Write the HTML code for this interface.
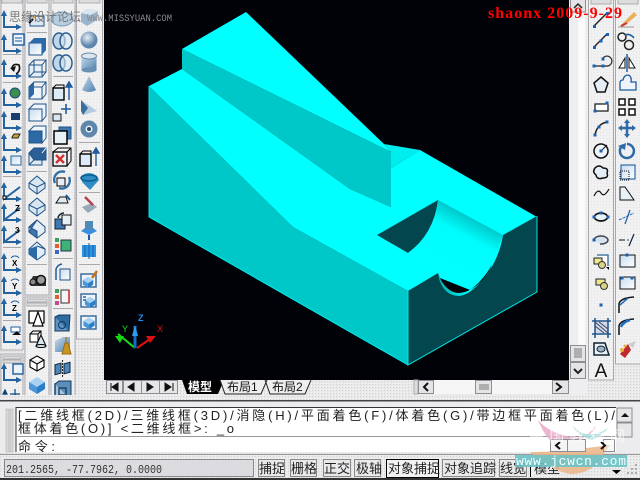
<!DOCTYPE html>
<html><head><meta charset="utf-8"><style>
html,body{margin:0;padding:0;background:#e6e6e6;width:640px;height:480px;overflow:hidden}
svg{display:block}
text{font-family:"WenQuanYi Zen Hei","Liberation Sans","Noto Sans CJK SC",sans-serif}
</style></head><body>
<svg width="640" height="480" viewBox="0 0 640 480">
<defs>
<pattern id="dz" width="3" height="3" patternUnits="userSpaceOnUse"><rect width="3" height="3" fill="#e9e9e9"/><rect width="1" height="1" fill="#d2d2d8"/><rect x="2" y="2" width="1" height="1" fill="#f6f6f6"/></pattern>
<pattern id="tb" width="3" height="3" patternUnits="userSpaceOnUse"><rect width="3" height="3" fill="#f1f1f1"/><rect width="1" height="1" fill="#e4e4e8"/></pattern>
<linearGradient id="lg" x1="0" y1="0" x2="1" y2="1"><stop offset="0" stop-color="#c6dcf0"/><stop offset="1" stop-color="#fff"/></linearGradient>
<linearGradient id="bl" x1="0" y1="0" x2="1" y2="1"><stop offset="0" stop-color="#c9dbea"/><stop offset="1" stop-color="#4d7fae"/></linearGradient>
<linearGradient id="cy" gradientUnits="userSpaceOnUse" x1="468" y1="212" x2="438" y2="270"><stop offset="0" stop-color="#00bfc2"/><stop offset=".35" stop-color="#00fdfd"/><stop offset="1" stop-color="#00ffff"/></linearGradient>
<linearGradient id="cy2" gradientUnits="userSpaceOnUse" x1="436" y1="282" x2="462" y2="272"><stop offset="0" stop-color="#00a9ad"/><stop offset="1" stop-color="#00ffff"/></linearGradient>
<radialGradient id="sp" cx=".4" cy=".35"><stop offset="0" stop-color="#e8f0f8"/><stop offset="1" stop-color="#5f86ad"/></radialGradient>

<g id="u"><path d="M-8-9V6H8" fill="none" stroke="#24639f" stroke-width="2"/><path d="M-11-5-8-11-5-5ZM4 3 10 6 4 9Z" fill="#24639f"/></g>
<g id="u2"><path d="M-8-9V6L8-6M-8 6H8" fill="none" stroke="#24639f" stroke-width="2"/><path d="M-11-5-8-11-5-5ZM4 3 10 6 4 9Z" fill="#24639f"/></g>

<g id="c1"><path d="M-5-5-1-9H9V3L5 7Z" fill="#2b6aa6"/><rect x="-8" y="-4" width="13" height="12" fill="url(#lg)" stroke="#1f5288"/><path d="M-8-4-3-9H9L5-4ZM5-4 9-9V3L5 8Z" fill="#2a6aa8"/></g>
<g id="c2"><rect x="-8" y="-4" width="13" height="12" fill="#e6eef6" stroke="#1f5288"/><path d="M-8-4-3-9H9V3L5 8M5-4 9-9M-3-9V3H9M-3 3-8 8" fill="none" stroke="#1f5288"/></g>
<g id="c3"><rect x="-8" y="-4" width="13" height="12" fill="#f0f5fa" stroke="#1f5288"/><path d="M-8-4-3-9V3L-8 8Z" fill="#2b6aa6"/><path d="M-8-4-3-9H9V3L5 8M5-4 9-9" fill="none" stroke="#1f5288"/></g>
<g id="c4"><rect x="-8" y="-4" width="13" height="12" fill="url(#lg)" stroke="#1f5288"/><path d="M-8-4-3-9H9V3L5 8V-4Z" fill="#eef4fa" stroke="#1f5288"/></g>
<g id="c5"><path d="M-8-4-3-9H9V3L5 8V-4Z" fill="#eef4fa" stroke="#1f5288"/><rect x="-8" y="-4" width="13" height="12" fill="#2b6aa6" stroke="#1f5288"/></g>
<g id="c6"><rect x="-8" y="-4" width="13" height="12" fill="#dfe9f3" stroke="#1f5288"/><path d="M-8-4-3-9H9V3H-3Z" fill="#2b5f96" stroke="#1f5288"/><path d="M5-4 9-9" stroke="#fff"/><path d="M-3 3 -8 8" stroke="#1f5288"/></g>
<g id="dia"><path d="M0-9 8-2V3L0 9-8 3V-2Z" fill="#d8e6f2" stroke="#1f5288"/><path d="M-8-2 0 2 8-2M0 2V9" fill="none" stroke="#1f5288"/></g>
<g id="dia2"><path d="M0-9 8-2V3L0 9-8 3V-2Z" fill="#e3edf6" stroke="#1f5288"/><path d="M0-9-8-2 0 2V9L-8 3Z" fill="#3d77ae" stroke="#1f5288"/></g>
<g id="dia3"><path d="M0-9 8-2V3L0 9-8 3V-2Z" fill="#e3edf6" stroke="#1f5288"/><path d="M-8-2 0-5 0 9-8 3Z" fill="#2b6aa6"/><path d="M0-5 8-2" stroke="#1f5288"/></g>
<g id="rings"><ellipse cx="-3" cy="0" rx="6" ry="8" fill="#bfd5e8" stroke="#2c5f8e" stroke-width="1.5"/><ellipse cx="4" cy="0" rx="6" ry="8" fill="#dce8f2" fill-opacity=".6" stroke="#2c5f8e" stroke-width="1.5"/></g>
<g id="rc"><rect x="-9" y="-4" width="11" height="12" fill="#dcebf7" stroke="#000" stroke-width="1.4"/><path d="M-9-4-6-7H2V5" fill="none" stroke="#000"/><path d="M7 8V-6M4-5 7-10 10-5Z" fill="#1f5c9e" stroke="#1f5c9e" stroke-width="1.4"/></g>
<g id="mv"><rect x="-9" y="1" width="8" height="7" fill="#d8e7f4" stroke="#111"/><path d="M4-9V1M-1-4H9" stroke="#1f5c9e" stroke-width="1.6"/></g>
<g id="off"><rect x="-3" y="-9" width="12" height="12" fill="#3c78b0" stroke="#1f5288"/><rect x="-8" y="-5" width="13" height="13" fill="#e9f1f8" stroke="#000" stroke-width="1.5"/></g>
<g id="xc"><rect x="-9" y="-5" width="14" height="14" fill="#e9f0f6" stroke="#000" stroke-width="1.3"/><path d="M-9-5-4-9H9V4L5 9M5-5 9-9" fill="none" stroke="#000"/><path d="M-6-2 2 6M2-2-6 6" stroke="#d6322e" stroke-width="2.4"/></g>
<g id="rot"><path d="M-7 3A8 8 0 0 1 3-8M7-3A8 8 0 0 1-3 8" fill="none" stroke="#2f6da8" stroke-width="2.4"/><rect x="-5" y="-2" width="8" height="8" fill="#e5eef6" stroke="#000"/></g>
<g id="box"><path d="M-8-5-2-9 9-7 8 2 -2 8-8 4Z" fill="#9bb5cc"/><path d="M-8-5-2-9 9-7 2-3Z" fill="#d8e6f0"/></g>
<g id="sph"><circle r="8.5" fill="url(#sp)"/></g>
<g id="cyl"><rect x="-7.5" y="-7" width="15" height="14" fill="url(#bl)"/><ellipse cy="-7" rx="7.5" ry="3" fill="#dbe6f0" stroke="#6c8aa8"/><ellipse cy="7" rx="7.5" ry="2.5" fill="#6a8fb2"/></g>
<g id="cone"><path d="M0-9 7 5Q0 9-7 5Z" fill="url(#bl)"/></g>
<g id="wed"><path d="M-8-7 8 4 -6 8Z" fill="#b4cbdf"/><path d="M-8-7-8 4-6 8 -1 1Z" fill="#3e6e9b"/></g>
<g id="tor"><circle r="6" fill="none" stroke="#5d87ad" stroke-width="5"/><circle r="2" fill="#234d73"/></g>
<g id="cube3"><path d="M0-8 8-3 0 2-8-3Z" fill="#a8d2f2"/><path d="M-8-3 0 2V9L-8 4Z" fill="#4b97d8"/><path d="M8-3 0 2V9L8 4Z" fill="#2a7dc8"/></g>
<g id="ico-line"><path d="M-7 6 6-7" stroke="#222" stroke-width="1.4"/><rect x="-8" y="5" width="3" height="3" fill="#1c62b0"/><rect x="5" y="-8" width="3" height="3" fill="#1c62b0"/></g>
<g id="mark"><rect x="-1.5" y="-1.5" width="3" height="3" fill="#1c62b0"/></g>
</defs>

<rect width="640" height="480" fill="url(#dz)"/>

<!-- left toolbars -->
<g fill="url(#tb)" stroke="#a9a9ad">
<rect x="1" y="-2" width="22" height="352"/>
<rect x="1" y="354" width="22" height="46"/>
<rect x="25" y="-2" width="24" height="297"/><rect x="25" y="297" width="24" height="103"/>
<rect x="51" y="-2" width="24" height="402"/>
<rect x="76.500" y="-2" width="26" height="341"/>
</g>
<g fill="#dcdcdc" stroke="#b0b0b4">
<rect x="2" y="-2" width="20" height="5"/><rect x="27" y="-2" width="20" height="5"/><rect x="53" y="-2" width="20" height="5"/><rect x="79" y="-2" width="21" height="5"/>
<rect x="3" y="356" width="18" height="3"/><rect x="3" y="360" width="18" height="3"/><rect x="27" y="299" width="20" height="3"/><rect x="27" y="303" width="20" height="3"/>
</g>
<path d="M3 54.500H21M3 82.500H21M3 176.500H21M3 247.500H21M3 320.500H21M27 32.500H47M27 171.500H47M27 264.500H47M53 76.500H73M53 258.500H73M53 308.500H73M79 142.500H100M79 192.500H100M79 264.500H100" stroke="#a8a8a8"/>

<!-- col 1 -->
<use href="#u" x="12" y="21"/><use href="#u" x="12" y="45"/><rect x="13" y="34" width="11" height="11" fill="#eaf2fa" stroke="#1f5c9e" stroke-width="1.4"/><path d="M15 38H22M15 41H22" stroke="#1f5c9e"/>
<use href="#u" x="12" y="70"/><path d="M12 68Q13 63 19 65Q21 71 16 74" fill="none" stroke="#111" stroke-width="1.6"/><path d="M10 68 16 66 14 72Z" fill="#111"/>
<use href="#u" x="12" y="99"/><circle cx="15" cy="93" r="5" fill="#3a8f4a" stroke="#1b4a86"/>
<use href="#u" x="12" y="122"/><rect x="11" y="113" width="9" height="7" fill="#163c70"/>
<use href="#u" x="12" y="144"/><path d="M12 137 14 134H20L18 138H12Z" fill="#c9a43a" stroke="#222"/>
<use href="#u" x="12" y="166"/><rect x="11" y="156" width="10" height="9" fill="url(#lg)" stroke="#24639f"/>
<use href="#u2" x="12" y="193"/><rect x="3" y="196" width="3" height="3" fill="#fff" stroke="#000"/>
<use href="#u2" x="12" y="214"/><text x="15" y="211" font-size="8" font-weight="bold" fill="#000">Z</text>
<use href="#u2" x="12" y="236"/><text x="15" y="233" font-size="8" font-weight="bold" fill="#000">3</text>
<use href="#u" x="12" y="264"/><text x="12" y="266" font-size="8" font-weight="bold" fill="#000">X</text><path d="M11 258A5 5 0 0 1 19 258" fill="none" stroke="#1f5c9e"/>
<use href="#u" x="12" y="287"/><text x="12" y="289" font-size="8" font-weight="bold" fill="#000">Y</text><path d="M11 281A5 5 0 0 1 19 281" fill="none" stroke="#1f5c9e"/>
<use href="#u" x="12" y="309"/><text x="12" y="311" font-size="8" font-weight="bold" fill="#000">Z</text><path d="M11 303A5 5 0 0 1 19 303" fill="none" stroke="#1f5c9e"/>
<use href="#u" x="12" y="336"/><rect x="11" y="327" width="9" height="5" fill="#fff" stroke="#1f5c9e"/><path d="M12 335 17 331 21 335Z" fill="#111"/>
<use href="#u" x="12" y="374"/><rect x="13" y="364" width="10" height="10" fill="#eaf2fa" stroke="#1f5c9e" stroke-width="1.4"/>
<path d="M5 392 5 399M3 394 5 390 7 394ZM15 389V399M10 394H20" stroke="#12457a" stroke-width="1.2" fill="#12457a"/>

<!-- col 2 -->
<rect x="30" y="16" width="14" height="10" fill="#dbe8f3" stroke="#1f5288"/><path d="M29 23 33 19" stroke="#111" stroke-width="2"/><path d="M33 18 36 16" stroke="#e0a030" stroke-width="2"/>
<use href="#c1" x="37" y="47"/><use href="#c2" x="37" y="69"/><use href="#c3" x="37" y="91"/><use href="#c4" x="37" y="113"/><use href="#c5" x="37" y="135"/><use href="#c6" x="37" y="157"/>
<use href="#dia" x="37" y="185"/><use href="#dia" x="37" y="207"/><use href="#dia2" x="37" y="229"/><use href="#dia3" x="37" y="251"/>
<path d="M29 284 33 276H43L46 279V286H31Z" fill="#333"/><circle cx="41" cy="280" r="4.500" fill="#999" stroke="#111" stroke-width="1.5"/><circle cx="33" cy="282" r="3" fill="#888" stroke="#111"/>
<rect x="29" y="311" width="15" height="12" fill="#fff" stroke="#000" stroke-width="1.2"/><path d="M38 312 33 326H43Z" fill="#fff" stroke="#000" stroke-width="1.2"/>
<rect x="30" y="334" width="8" height="8" fill="#fff" stroke="#000"/><path d="M30 334 33 331H41V339L38 342M38 334 41 331" fill="none" stroke="#000"/><path d="M41 335 36 346H46Z" fill="#d6e4f0" stroke="#000"/><ellipse cx="41" cy="346" rx="5" ry="1.500" fill="#d6e4f0" stroke="#000"/>
<path d="M37 356 44 360V367L37 371 30 367V360Z M30 360 37 364 44 360M37 364V371" fill="#fff" stroke="#000" stroke-width="1.1"/>
<use href="#cube3" x="37" y="385"/>

<!-- col 3 -->
<ellipse cx="62" cy="19" rx="11" ry="7" fill="#b6cde0" stroke="#2c5f8e" stroke-opacity=".5"/>
<use href="#rings" x="62" y="41"/><use href="#rings" x="62" y="63"/>
<use href="#rc" x="62" y="92"/><use href="#mv" x="62" y="113"/><use href="#off" x="62" y="136"/><use href="#xc" x="62" y="157"/><use href="#rot" x="62" y="180"/>
<path d="M56 203 60 197H66L68 203Z" fill="#dfe9f2" stroke="#111"/><path d="M66 195 70 200" stroke="#1f5c9e" stroke-width="2"/>
<rect x="55" y="219" width="10" height="10" fill="#3d78b0" stroke="#123"/><rect x="62" y="215" width="9" height="10" fill="#e6eef6" stroke="#111"/><path d="M58 218A6 6 0 0 1 64 213" fill="none" stroke="#123" stroke-width="1.500"/>
<rect x="55" y="238" width="4" height="4" fill="#3aa05a"/><rect x="55" y="244" width="4" height="4" fill="#e0602c"/><rect x="55" y="250" width="4" height="4" fill="#3a6ac0"/><rect x="61" y="240" width="10" height="11" fill="#3fb27a" stroke="#234"/>
<rect x="60" y="269" width="10" height="11" fill="url(#lg)" stroke="#1f5288"/><path d="M56 280V269A8 8 0 0 1 62 264" fill="none" stroke="#1f5c9e" stroke-width="1.5"/>
<rect x="55" y="289" width="4" height="4" fill="#3aa05a"/><rect x="55" y="295" width="4" height="4" fill="#e0602c"/><rect x="55" y="301" width="4" height="4" fill="#c04a8a"/><rect x="61" y="290" width="8" height="13" fill="#f2f5f8" stroke="#333"/><path d="M69 290V303" stroke="#d02020" stroke-width="1.500"/>
<rect x="55" y="317" width="14" height="14" fill="#5f94c0" stroke="#12385e"/><path d="M55 317 59 315H70L69 331" fill="#2f6aa0" stroke="#12385e"/><circle cx="62" cy="325" r="3.500" fill="none" stroke="#12385e"/>
<path d="M55 341 63 337H70V352H55Z" fill="url(#bl)"/><path d="M66 337V343M62 354 65 343H68L71 354Z" fill="#c9951f" stroke="#a06a10"/>
<rect x="55" y="364" width="6" height="10" fill="#4a87bd" stroke="#123" transform="skewY(-15) translate(0 15.500)"/><rect x="64" y="362" width="6" height="10" fill="#4a87bd" stroke="#123" transform="skewY(-15) translate(0 19)"/><path d="M62.500 360V378" stroke="#222" stroke-dasharray="2 1"/>
<rect x="55" y="384" width="14" height="14" fill="#a9c5dc" stroke="#12385e" stroke-width="1.4"/><path d="M55 384 59 381H71V395L69 398" fill="#5c8eb8" stroke="#12385e"/><rect x="59" y="388" width="7" height="7" fill="none" stroke="#12385e" stroke-width="1.3"/>

<!-- col 4 -->
<use href="#box" x="89" y="18"/><use href="#sph" x="89" y="40"/><use href="#cyl" x="89" y="63"/><use href="#cone" x="89" y="85"/><use href="#wed" x="89" y="107"/><use href="#tor" x="89" y="129"/>
<use href="#rc" x="89" y="158"/>
<path d="M81 176Q89 170 97 176L99 180 90 190 82 182Z" fill="#2f8cc4"/><ellipse cx="89" cy="178" rx="8" ry="3" fill="none" stroke="#0e5f90" stroke-width="1.500"/>
<path d="M82 207 92 203 97 207 88 213Z" fill="#99a9b8"/><path d="M85 197 93 205" stroke="#b04050" stroke-width="2.500"/>
<path d="M81 231 89 225 97 231 89 235Z" fill="#3a90e0"/><rect x="85" y="221" width="8" height="9" fill="#4f8bb8"/><path d="M89 235V240" stroke="#1a5aa8" stroke-width="2"/>
<rect x="82" y="245" width="14" height="12" fill="#2f93e0"/><path d="M85 245V257M89 243V259M93 245V257" stroke="#0f5fa8"/>
<rect x="81" y="274" width="15" height="13" fill="#eef4fa" stroke="#3d6f9d" stroke-width="1.500"/><use href="#cube3" transform="translate(88 282) scale(.65)"/><path d="M92 278 97 271" stroke="#c9721c" stroke-width="2.500"/>
<rect x="81" y="294" width="15" height="13" fill="#eef4fa" stroke="#3d6f9d" stroke-width="1.500"/><use href="#cube3" transform="translate(90 302) scale(.65)"/><path d="M83 297H86M83 300H86" stroke="#2f6aa0" stroke-width="1.500"/>
<rect x="81" y="316" width="15" height="13" fill="#eef4fa" stroke="#3d6f9d" stroke-width="1.500"/><use href="#cube3" transform="translate(89 323) scale(.7)"/>

<!-- canvas -->
<rect x="104" y="0" width="465" height="380" fill="#010108"/>

<!-- model -->
<path d="M149 86 149 217 408 365 408 291 293 227Z" fill="#00c8c8"/>
<path d="M149 86V217L408 365" fill="none" stroke="#00e8e8"/>
<path d="M149 86 182 69 350 189 391 207V168L420 150 537 217 408 291 293 227Z" fill="#00ffff"/>
<path d="M182 49 246 12 384 144 391 152Z" fill="#00ffff"/>
<path d="M182 49 391 152V207L350 189 182 69Z" fill="#00c8c8"/>
<path d="M384 144 420 150 391 168V152Z" fill="#00eded"/>
<path d="M408 291 438 273C440 289 449 296 459 296C478 294 498 262 503 235L537 216V292L408 365Z" fill="#04464d"/>
<path d="M408 291V365L537 292V216" fill="none" stroke="#00e8e8" stroke-width="1"/>
<path d="M438 200 377 235 408 253Q434 234 438 200Z" fill="#04464d"/>
<path d="M438 200 503 235C499 256 487 278 470 290L440 278 438 273 408 253Q434 234 438 200Z" fill="url(#cy)"/>
<path d="M438 273C440 289 449 296 459 296C470 295 480 284 490 270L503 235C499 262 480 292 459 293C450 293 442 285 438 273Z" fill="url(#cy2)"/>

<!-- UCS -->
<path d="M135 348 118 334" stroke="#14e014" stroke-width="2"/><path d="M115 336 124 336 120 343Z" fill="#14d814"/>
<path d="M137 348 150 339" stroke="#e01010" stroke-width="2"/><path d="M146 336 156 336 150 343Z" fill="#d81010"/>
<path d="M135 348V326" stroke="#0d6fc8" stroke-width="3"/><path d="M135 325 138 336H132Z" fill="#2c9cf0"/>
<text x="138" y="321" font-size="9" fill="#1a8ff0" font-weight="bold">Z</text>
<text x="122" y="332" font-size="9" fill="#1ce01c">Y</text><text x="157" y="332" font-size="9" fill="#e81010">X</text>

<!-- right scroll + toolbars -->
<rect x="569" y="0" width="18" height="400" fill="#eeeef0"/><rect x="578" y="0" width="7" height="345" fill="#fbfbfb"/>
<g fill="#e4e4e6" stroke="#8d8d92"><rect x="570.500" y="345.500" width="15" height="16"/><rect x="570.500" y="362.500" width="15" height="16"/><rect x="570.500" y="-2" width="15" height="14"/></g>
<path d="M574 349H582M574 351H582M574 353H582M574 355H582M574 357H582" stroke="#777"/>
<path d="M574 369 578 373 582 369" fill="none" stroke="#222" stroke-width="2"/><path d="M574 8 578 4 582 8" fill="none" stroke="#222" stroke-width="1.500"/>
<g fill="url(#tb)" stroke="#a9a9ad"><rect x="588.500" y="-2" width="25" height="382"/><rect x="615.500" y="-2" width="26" height="366"/></g>
<rect x="591" y="-2" width="20" height="6" fill="#ddd" stroke="#aaa"/><rect x="618" y="-2" width="20" height="6" fill="#ddd" stroke="#aaa"/>
<use href="#ico-line" x="601" y="20"/><use href="#ico-line" x="601" y="41"/><use href="#mark" x="601" y="41"/>
<path d="M594 66H606A5 5 0 1 0 603 58" fill="none" stroke="#222" stroke-width="1.200"/><use href="#mark" x="594" y="66"/><use href="#mark" x="603" y="66"/><use href="#mark" x="603" y="59"/>
<path d="M601 77 608 83 605 92H597L594 83Z" fill="#e4eef7" stroke="#111" stroke-width="1.500"/>
<rect x="595" y="104" width="13" height="7" fill="#fff" stroke="#111" stroke-width="1.200"/><use href="#mark" x="595" y="111"/><use href="#mark" x="607" y="103"/>
<path d="M595 135Q597 124 607 122" fill="none" stroke="#222" stroke-width="1.500"/><use href="#mark" x="595" y="135"/><use href="#mark" x="607" y="122"/><use href="#mark" x="599" y="127"/>
<circle cx="601" cy="151" r="7" fill="#eef4fa" stroke="#111" stroke-width="1.500"/><path d="M601 151 607 145" stroke="#111"/><use href="#mark" x="601" y="151"/>
<path d="M595 168Q599 164 603 168Q609 168 607 173Q609 178 603 178Q597 180 596 175Q592 172 595 168Z" fill="#e4eef7" stroke="#111" stroke-width="1.500"/>
<path d="M594 196Q598 188 601 193T609 189" fill="none" stroke="#111" stroke-width="1.200"/>
<ellipse cx="601" cy="217" rx="6.500" ry="4" fill="#e9f1f8" stroke="#111" stroke-width="1.700"/><use href="#mark" x="594" y="217"/><use href="#mark" x="601" y="213"/><use href="#mark" x="608" y="217"/>
<path d="M594 240A7 4 0 1 1 600 244" fill="#d6e3ef" stroke="#445" stroke-width="1.500"/><use href="#mark" x="594" y="240"/>
<path d="M597 255H608V266" fill="#fff" stroke="#4d7aa4" stroke-width="1.500"/><rect x="594" y="258" width="8" height="6" fill="#f2e68a" stroke="#123"/><circle cx="602" cy="265" r="3.500" fill="#d8d488" stroke="#333"/><path d="M606 267H609V270Z" fill="#000"/>
<rect x="596" y="279" width="9" height="6" fill="#f2e68a" stroke="#123"/><circle cx="604" cy="286" r="3.500" fill="#d8d488" stroke="#333"/>
<use href="#mark" x="601" y="305"/>
<rect x="595" y="322" width="13" height="11" fill="#cfdbe8"/><path d="M595 322 608 333M599 322 608 329M595 326 604 333" stroke="#446"/><path d="M592 321H611M592 334H611M595 318V338M608 318V338" stroke="#1f5288" stroke-width="1.500"/>
<path d="M594 343H605L609 355H594Z" fill="#e9f1f8" stroke="#123" stroke-width="1.500"/><ellipse cx="601" cy="349" rx="4" ry="3" fill="#9fb3c6" stroke="#123"/>
<text x="601" y="377" font-size="19" fill="#111" text-anchor="middle" font-weight="normal" style="font-family:'Liberation Sans',sans-serif">A</text>

<path d="M620 26 634 12 637 15 623 27Z" fill="#e8b05a"/><path d="M621 26 627 23" stroke="#c9373a" stroke-width="2"/><path d="M618 27H634" stroke="#999"/>
<circle cx="622" cy="37" r="4" fill="none" stroke="#222" stroke-width="1.500"/><circle cx="629" cy="45" r="4.500" fill="none" stroke="#222" stroke-width="1.500"/><path d="M625 35Q630 33 634 38" fill="none" stroke="#1f5c9e" stroke-width="1.500"/>
<path d="M627 54V72" stroke="#1f5c9e" stroke-width="1.500"/><path d="M625 58V68H619ZM629 58V68H635Z" fill="#fff" stroke="#111"/>
<path d="M620 90V83Q620 80 623 80Q624 75 628 75Q632 76 631 82H636V90Z" fill="#eef4fa" stroke="#1f5c9e" stroke-width="1.300"/>
<g fill="#fff" stroke="#111" stroke-width="1.500"><rect x="619" y="99" width="6" height="6"/><rect x="629" y="99" width="6" height="6"/><rect x="619" y="109" width="6" height="6"/><rect x="629" y="109" width="6" height="6"/></g>
<path d="M627 121V136M620 128H634" stroke="#2e6aa6" stroke-width="2.500"/><path d="M627 119 630 123H624ZM627 138 630 134H624ZM618 128 622 125V131ZM636 128 632 125V131Z" fill="#2e6aa6"/>
<path d="M622 146A7 7 0 1 0 627 144" fill="none" stroke="#2e6aa6" stroke-width="2.500"/><path d="M618 146 626 143 625 150Z" fill="#2e6aa6"/>
<rect x="621" y="165" width="14" height="14" fill="url(#lg)" stroke="#2e6aa6" stroke-width="1.200"/><rect x="620" y="171" width="9" height="9" fill="none" stroke="#111" stroke-dasharray="1 1"/>
<path d="M620 187H625L634 200H620Z" fill="#e9f1f8" stroke="#111"/>
<path d="M619 220 634 213" stroke="#1f6ec0" stroke-width="1" stroke-dasharray="3 1"/><path d="M625 224 630 210" stroke="#1f5c9e" stroke-width="1.200"/>
<path d="M619 240H625" stroke="#111"/><path d="M627 240H629" stroke="#1f5c9e"/><path d="M629 246 634 234" stroke="#123" stroke-width="1.200"/>
<rect x="620" y="255" width="15" height="12" fill="url(#lg)" stroke="#111"/><use href="#mark" x="627" y="255"/>
<rect x="620" y="277" width="15" height="12" fill="url(#lg)" stroke="#111"/><use href="#mark" x="622" y="278"/><use href="#mark" x="632" y="278"/>
<path d="M619 313V304Q620 298 634 297" fill="none" stroke="#111" stroke-width="1.500"/><path d="M620 305 628 298" stroke="#1f6ec0" stroke-width="1.500"/>
<path d="M619 335V326Q620 320 634 319" fill="none" stroke="#111" stroke-width="1.500"/><path d="M621 327Q623 322 630 320" fill="none" stroke="#1f6ec0" stroke-width="2.500"/>
<path d="M620 354 628 344 631 350 625 358Z" fill="#c02a2a"/><path d="M628 344 636 341 633 348Z" fill="#ccc"/><circle cx="622" cy="350" r="2" fill="#e8b040"/><circle cx="625" cy="346" r="1.500" fill="#e8b040"/>

<!-- tab row -->
<rect x="104" y="380" width="466" height="15" fill="url(#dz)"/>
<rect x="178" y="380" width="240" height="17" fill="url(#dz)"/>
<g fill="#e6e6e8" stroke="#8d8d92"><rect x="106.500" y="380.500" width="16" height="13"/><rect x="123.500" y="380.500" width="18" height="13"/><rect x="141.500" y="380.500" width="18" height="13"/><rect x="159.500" y="380.500" width="18" height="13"/></g>
<path d="M111 383V391M118 383 112 387 118 391ZM134 383 128 387 134 391ZM147 383 153 387 147 391ZM165 383 171 387 165 391ZM173 383V391" stroke="#111" fill="#111"/>
<path d="M182 380 187 394H218L224 380Z" fill="#000"/>
<path d="M220 380 225 394H261L267 380M265 380 270 394H305L311 380" fill="#eee" stroke="#222"/>
<text x="188" y="391" font-size="12" font-weight="bold" fill="#fff">模型</text>
<text x="227" y="391" font-size="12" fill="#111">布局1</text><text x="272" y="391" font-size="12" fill="#111">布局2</text>

<!-- h scroll -->
<rect x="414" y="380" width="4" height="14" fill="#ddd" stroke="#aaa"/>
<rect x="418" y="380" width="150" height="14" fill="#f6f6f6"/>
<g fill="#e4e4e6" stroke="#8d8d92"><rect x="418.500" y="380.500" width="15" height="13"/><rect x="475.500" y="380.500" width="16" height="13"/><rect x="552.500" y="380.500" width="16" height="13"/></g>
<path d="M428 383 424 387 428 391M556 383 561 387 556 391" fill="none" stroke="#111" stroke-width="2"/>
<path d="M480 384V390M482 384V390M484 384V390M486 384V390M488 384V390" stroke="#777"/>

<!-- command -->
<rect x="0" y="395" width="640" height="7" fill="url(#dz)"/>
<rect x="0" y="400" width="640" height="1.500" fill="#444"/>
<rect x="0" y="402" width="640" height="54" fill="#ececee"/>
<rect x="6" y="409" width="3" height="43" fill="#d8d8d8" stroke="#aaa" stroke-width=".5"/><rect x="10" y="409" width="3" height="43" fill="#d8d8d8" stroke="#aaa" stroke-width=".5"/>
<rect x="16" y="408" width="600" height="44" fill="#fff"/><path d="M16 452V407.500H616" fill="none" stroke="#333"/><rect x="16" y="436" width="600" height="1" fill="#999"/>
<g fill="#e6e6e8" stroke="#8d8d92"><rect x="617" y="408" width="15" height="14"/><rect x="617" y="423" width="15" height="14"/></g>
<path d="M621 417 625 413 629 417Z" fill="#111"/>
<text x="18" y="420" font-size="13" fill="#222" textLength="597" lengthAdjust="spacing">[二维线框(2D)/三维线框(3D)/消隐(H)/平面着色(F)/体着色(G)/带边框平面着色(L)/</text>
<text x="18" y="433" font-size="13" fill="#222" textLength="216" lengthAdjust="spacing">框体着色(O)] &lt;二维线框&gt;: _o</text>
<text x="18" y="451" font-size="13" fill="#222" textLength="37" lengthAdjust="spacing">命令:</text>

<!-- status -->
<rect x="0" y="453" width="640" height="25" fill="url(#dz)"/>
<rect x="0" y="454" width="640" height="1" fill="#999"/><rect x="0" y="478" width="640" height="2" fill="#333"/>
<rect x="4.500" y="459.500" width="249" height="17" fill="#dcdce0" stroke="#888"/>
<text x="6" y="473" font-size="12" fill="#333" textLength="156" style="font-family:'Liberation Mono',monospace" lengthAdjust="spacingAndGlyphs">201.2565, -77.7962, 0.0000</text>
<g fill="#e9e9ec" stroke="#888"><rect x="258.500" y="459.500" width="26" height="17"/><rect x="290.500" y="459.500" width="26" height="17"/><rect x="323.500" y="459.500" width="27" height="17"/><rect x="354.500" y="459.500" width="26" height="17"/><rect x="442.500" y="459.500" width="52" height="17"/><rect x="499.500" y="459.500" width="27" height="17"/></g>
<rect x="386.500" y="459.500" width="52" height="18" fill="#f2f2f4" stroke="#000"/>
<path d="M530.500 477V460H556" fill="#f2f2f4" stroke="#000"/>
<g font-size="13" fill="#222"><text x="259" y="473">捕捉</text><text x="291" y="473">栅格</text><text x="324" y="473">正交</text><text x="356" y="473">极轴</text><text x="388" y="473">对象捕捉</text><text x="444" y="473">对象追踪</text><text x="500" y="473">线宽</text><text x="534" y="473">模型</text></g>
<path d="M612 470H621L616.500 474Z" fill="#000"/>
<path d="M635 464h2v2h-2zM631 468h2v2h-2zM635 468h2v2h-2zM627 472h2v2h-2zM631 472h2v2h-2zM635 472h2v2h-2z" fill="#aaa"/>

<!-- watermark -->
<path d="M538 420Q548 432 570 437 590 440 596 426 580 445 556 446 544 436 538 420Z" fill="#e9a8c8" fill-opacity=".85"/>
<path d="M572 425Q578 436 592 440 604 434 608 428 596 436 586 434 578 432 572 425Z" fill="#a8dcdc" fill-opacity=".85"/>
<path d="M530 452Q560 452 610 445L598 462Q588 474 570 474 550 470 530 452Z" fill="#ecb486" fill-opacity=".85"/>
<g fill="#f4f4f4" stroke="#8d8d92"><rect x="550.500" y="439.500" width="17" height="12"/><rect x="567.500" y="439.500" width="18" height="12"/><rect x="603.500" y="439.500" width="11" height="12" fill-opacity=".5"/></g>
<path d="M560 442 556 445.500 560 449M601 442 605 445.500 601 449" fill="none" stroke="#111" stroke-width="2"/>
<text x="529" y="441" font-size="15" fill="#fff" fill-opacity=".7" textLength="96">中国教程网</text>
<rect x="515" y="455" width="112" height="12" fill="#6cc2c6" fill-opacity=".9"/>
<text x="516" y="465" font-size="13" fill="#f4ffff" textLength="110" style="font-family:'Liberation Mono',monospace" lengthAdjust="spacing">www.jcwcn.com</text>

<!-- top texts -->
<text x="9" y="21" font-size="12" fill="#777" textLength="72" lengthAdjust="spacing">思缘设计论坛</text>
<text x="87" y="21" font-size="10" fill="#8a8a8a" textLength="85" style="font-family:'Liberation Mono',monospace" lengthAdjust="spacingAndGlyphs">WWW.MISSYUAN.COM</text>
<text x="488" y="18" font-size="16" font-weight="bold" fill="#ff0000" textLength="134" style="font-family:'Liberation Serif',serif" lengthAdjust="spacing">shaonx 2009-9-29</text>
</svg>
</body></html>
